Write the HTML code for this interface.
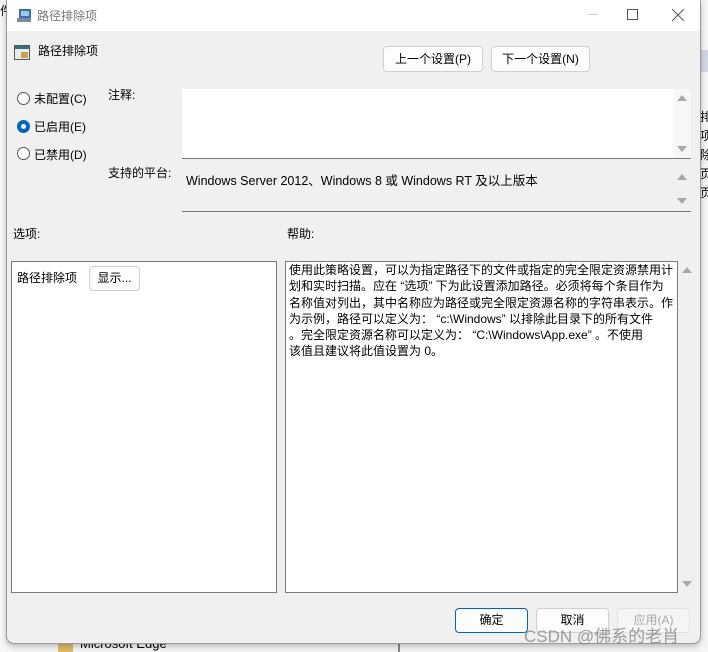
<!DOCTYPE html>
<html><head><meta charset="utf-8"><style>
*{margin:0;padding:0;box-sizing:border-box}
body{width:708px;height:652px;overflow:hidden;background:#f3f3f3;font-family:"Liberation Sans","Noto Sans CJK SC",sans-serif;font-size:12px;color:#000;position:relative}
.a{position:absolute}
.dlg{left:6px;top:0;width:695px;height:644px;background:#f0f0f0;border:1px solid #9a9a9a;border-top:none;border-radius:0 0 8px 8px;box-shadow:0 2px 6px rgba(0,0,0,.25)}
.btn{position:absolute;background:#fdfdfd;border:1px solid #d0d0d0;border-radius:4px;text-align:center;font-size:12px}
.radio{position:absolute;width:13px;height:13px;border:1px solid #555;border-radius:50%;background:#fff}
.box{position:absolute;background:#fff;border:1px solid #7a7a7a}
.sb{position:absolute;width:0;height:0;border-left:5px solid transparent;border-right:5px solid transparent}
.up{border-bottom:6px solid #a8a8a8}.dn{border-top:6px solid #a8a8a8}
</style></head><body>
<div class="a" style="left:0;top:0;width:7px;height:652px;background:#f7f7f7"></div>
<div class="a" style="left:0;top:2px;font-size:12px">件</div>
<div class="a" style="left:700px;top:0;width:8px;height:652px;background:#f5f5f5"></div>
<div class="a" style="left:701px;top:50px;width:7px;height:22px;background:#cfd8e3"></div>
<div class="a" style="left:700px;top:108px;font-size:12px;line-height:19px;width:8px;overflow:hidden">排<br>项<br>除<br>页<br>页</div>
<div class="a" style="left:58px;top:640px;width:15px;height:12px;background:#dcb96a"></div>
<div class="a" style="left:80px;top:636px;font-size:13px">Microsoft Edge</div>
<div class="a" style="left:398px;top:636px;width:2px;height:16px;background:#888"></div>
<div class="a dlg">
 <div class="a" style="left:0;top:0;width:693px;height:31px;background:#fff"></div>
 <svg class="a" style="left:10px;top:8px" width="17" height="16"><rect x="2" y="1" width="12" height="9" fill="#3a6ea5"/><rect x="4" y="3" width="8" height="5" fill="#9cc7ee"/><rect x="0" y="10" width="14" height="4" fill="#7a8aa0"/></svg>
 <div class="a" style="left:30px;top:7px;color:#777;font-size:12px">路径排除项</div>
 <div class="a" style="left:581px;top:14px;width:10px;height:1px;background:#ccc"></div>
 <div class="a" style="left:620px;top:9px;width:11px;height:11px;border:1px solid #555"></div>
 <svg class="a" style="left:665px;top:9px" width="12" height="12"><path d="M0 0L12 12M12 0L0 12" stroke="#555" stroke-width="1"/></svg>
 <svg class="a" style="left:7px;top:44px" width="17" height="17"><rect x="0.5" y="1.5" width="15" height="14" fill="#e8eef0" stroke="#555"/><rect x="1" y="2" width="14" height="3" fill="#3b6f7a"/><rect x="7" y="8" width="7" height="6" fill="#c9a050"/></svg>
 <div class="a" style="left:31px;top:42px">路径排除项</div>
 <div class="btn" style="left:376px;top:46px;width:100px;height:26px;line-height:24px">上一个设置(P)</div>
 <div class="btn" style="left:484px;top:46px;width:99px;height:26px;line-height:24px">下一个设置(N)</div>
 <div class="radio" style="left:10px;top:92px"></div><div class="a" style="left:27px;top:90px">未配置(C)</div>
 <div class="radio" style="left:10px;top:120px;border:4px solid #0067c0"></div><div class="a" style="left:27px;top:118px">已启用(E)</div>
 <div class="radio" style="left:10px;top:147px"></div><div class="a" style="left:27px;top:146px">已禁用(D)</div>
 <div class="a" style="left:101px;top:86px">注释:</div>
 <div class="a" style="left:175px;top:89px;width:509px;height:70px;background:#fff;border-bottom:1px solid #777"></div>
 <div class="a" style="left:666px;top:89px;width:18px;height:69px;background:#f7f7f7"></div>
 <div class="sb up" style="left:670px;top:95px"></div><div class="sb dn" style="left:670px;top:146px"></div>
 <div class="a" style="left:101px;top:164px">支持的平台:</div>
 <div class="a" style="left:175px;top:167px;width:509px;height:45px;background:#f0f0f0;border-bottom:1px solid #777"></div>
 <div class="a" style="left:179px;top:170px;font-size:12.5px">Windows Server 2012、Windows 8 或 Windows RT 及以上版本</div>
 <div class="sb up" style="left:670px;top:174px"></div><div class="sb dn" style="left:670px;top:198px"></div>
 <div class="a" style="left:6px;top:225px">选项:</div>
 <div class="a" style="left:280px;top:225px">帮助:</div>
 <div class="box" style="left:4px;top:261px;width:266px;height:332px"></div>
 <div class="a" style="left:10px;top:269px">路径排除项</div>
 <div class="btn" style="left:82px;top:266px;width:51px;height:25px;line-height:23px">显示...</div>
 <div class="box" style="left:278px;top:261px;width:393px;height:332px"></div>
 <div class="a" style="left:282px;top:262px;width:395px;line-height:16.3px;font-size:12px;white-space:nowrap">使用此策略设置，可以为指定路径下的文件或指定的完全限定资源禁用计<br>划和实时扫描。应在 “选项” 下为此设置添加路径。必须将每个条目作为<br>名称值对列出，其中名称应为路径或完全限定资源名称的字符串表示。作<br>为示例，路径可以定义为：  “c:\Windows” 以排除此目录下的所有文件<br>。完全限定资源名称可以定义为：  “C:\Windows\App.exe” 。不使用<br>该值且建议将此值设置为 0。</div>
 <div class="sb up" style="left:675px;top:267px"></div><div class="sb dn" style="left:675px;top:581px"></div>
 <div class="btn" style="left:448px;top:608px;width:73px;height:25px;line-height:23px;border:1px solid #0067c0">确定</div>
 <div class="btn" style="left:529px;top:608px;width:73px;height:25px;line-height:23px">取消</div>
 <div class="btn" style="left:610px;top:608px;width:73px;height:25px;line-height:23px;color:#aaa;background:#f5f5f5;border-color:#e3e3e3">应用(A)</div>
</div>
<div class="a" style="left:524px;top:622px;font-size:17px;color:rgba(140,140,140,.85)">CSDN @佛系的老肖</div>
</body></html>
